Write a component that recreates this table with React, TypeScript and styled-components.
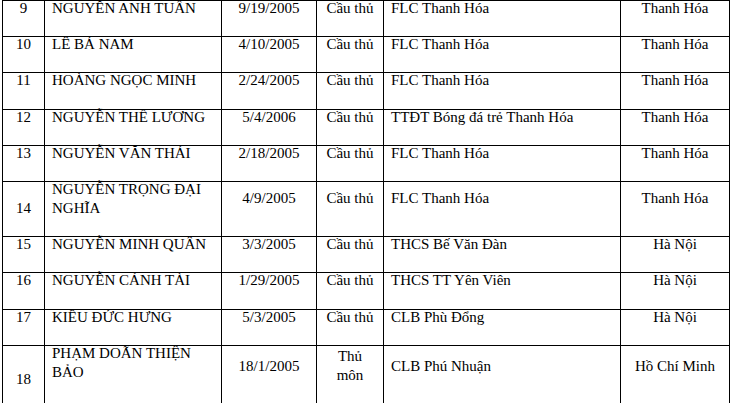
import React from "react";
import styled, { createGlobalStyle } from "styled-components";

const SERIF = `"Liberation Serif", "Times New Roman", Times, "DejaVu Serif", serif`;

const Global = createGlobalStyle`
  html, body { margin: 0; padding: 0; background: #ffffff; }
  body { font-family: ${SERIF}; color: #000; }
`;

const COLS = "42px 177px 95px 67px 237px 109px";

const Page = styled.div`
  padding: 0 0 0 2px;
`;

const Table = styled.div`
  display: flex;
  flex-direction: column;
  width: 728px;
  box-sizing: border-box;
  border-top: 1px solid #000;
  border-left: 1px solid #000;
`;

const Row = styled.div`
  display: grid;
  grid-template-columns: ${COLS};
`;

const Cell = styled.div<{ $align?: "top" | "middle"; $center?: boolean; $offset?: number }>`
  box-sizing: border-box;
  display: flex;
  flex-direction: column;
  justify-content: ${(p) => (p.$align === "middle" ? "center" : "flex-start")};
  text-align: ${(p) => (p.$center ? "center" : "left")};
  padding: ${(p) => p.$offset ?? 0}px 7px 18.2px;
  border-right: 1px solid #000;
  border-bottom: 1px solid #000;
  font-family: ${SERIF};
  font-size: 15px;
  line-height: 19px;
`;

const Text = styled.span`
  display: block;
  margin-top: -2px;
  font-family: ${SERIF};
`;

type Player = {
  no: number;
  name: string;
  dob: string;
  role: string;
  club: string;
  region: string;
  numOffset?: number;
};

const players: Player[] = [
  { no: 9, name: "NGUYỄN ANH TUẤN", dob: "9/19/2005", role: "Cầu thủ", club: "FLC Thanh Hóa", region: "Thanh Hóa" },
  { no: 10, name: "LÊ BÁ NAM", dob: "4/10/2005", role: "Cầu thủ", club: "FLC Thanh Hóa", region: "Thanh Hóa" },
  { no: 11, name: "HOÀNG NGỌC MINH", dob: "2/24/2005", role: "Cầu thủ", club: "FLC Thanh Hóa", region: "Thanh Hóa" },
  { no: 12, name: "NGUYỄN THẾ LƯƠNG", dob: "5/4/2006", role: "Cầu thủ", club: "TTĐT Bóng đá trẻ Thanh Hóa", region: "Thanh Hóa" },
  { no: 13, name: "NGUYỄN VĂN THÁI", dob: "2/18/2005", role: "Cầu thủ", club: "FLC Thanh Hóa", region: "Thanh Hóa" },
  { no: 14, name: "NGUYỄN TRỌNG ĐẠI NGHĨA", dob: "4/9/2005", role: "Cầu thủ", club: "FLC Thanh Hóa", region: "Thanh Hóa", numOffset: 19 },
  { no: 15, name: "NGUYỄN MINH QUÂN", dob: "3/3/2005", role: "Cầu thủ", club: "THCS Bế Văn Đàn", region: "Hà Nội" },
  { no: 16, name: "NGUYỄN CẢNH TÀI", dob: "1/29/2005", role: "Cầu thủ", club: "THCS TT Yên Viên", region: "Hà Nội" },
  { no: 17, name: "KIỀU ĐỨC HƯNG", dob: "5/3/2005", role: "Cầu thủ", club: "CLB Phù Đổng", region: "Hà Nội" },
  { no: 18, name: "PHẠM DOÃN THIỆN BẢO", dob: "18/1/2005", role: "Thủ môn", club: "CLB Phú Nhuận", region: "Hồ Chí Minh", numOffset: 26 },
];

export default function App() {
  return (
    <>
      <Global />
      <Page>
        <Table>
          {players.map((p) => (
            <Row key={p.no}>
              <Cell $center $offset={p.numOffset}>
                <Text>{p.no}</Text>
              </Cell>
              <Cell>
                <Text>{p.name}</Text>
              </Cell>
              <Cell $align="middle" $center>
                <Text>{p.dob}</Text>
              </Cell>
              <Cell $align="middle" $center>
                <Text>{p.role}</Text>
              </Cell>
              <Cell $align="middle">
                <Text>{p.club}</Text>
              </Cell>
              <Cell $align="middle" $center>
                <Text>{p.region}</Text>
              </Cell>
            </Row>
          ))}
        </Table>
      </Page>
    </>
  );
}
